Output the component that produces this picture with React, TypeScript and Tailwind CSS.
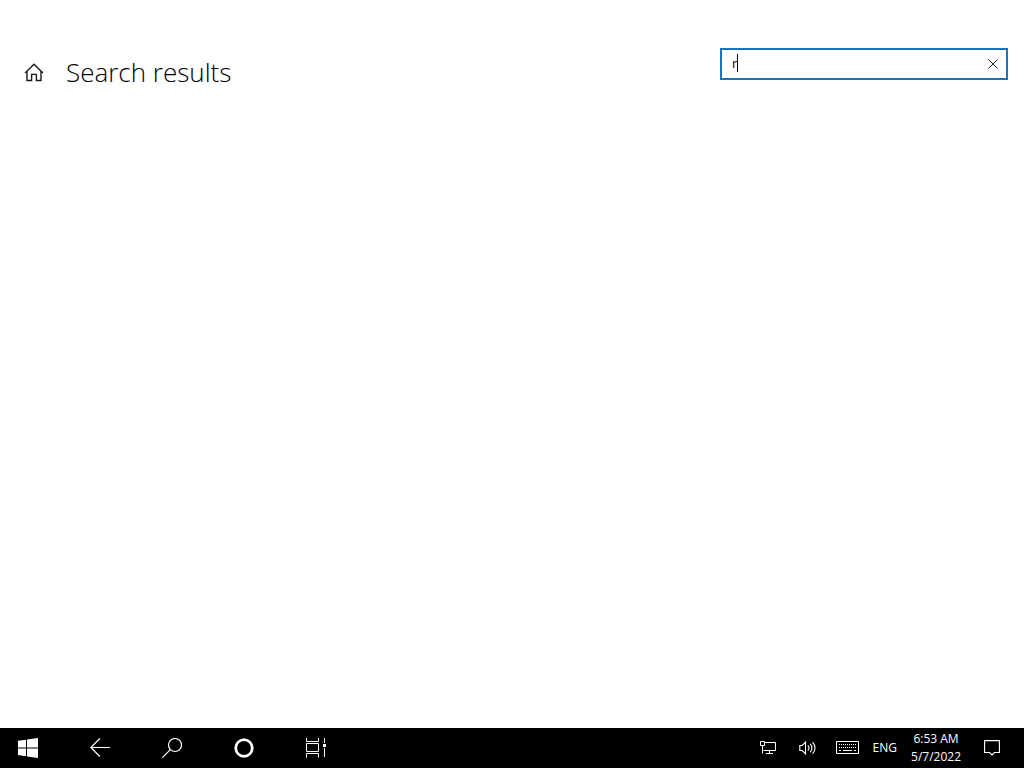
import { useState } from "react";
import type { ReactNode } from "react";

function TaskButton({ label, children }: { label: string; children: ReactNode }) {
  return (
    <button
      type="button"
      aria-label={label}
      className="flex h-10 w-14 items-center justify-center hover:bg-white/10"
    >
      {children}
    </button>
  );
}

function HomeIcon() {
  return (
    <svg viewBox="0 0 20 20" className="size-5" fill="none" stroke="#1a1a1a" strokeWidth="1.4">
      <path d="M1 11 10 2.3l9 8.7" />
      <path d="M3 9.3v9.200h4.600v-6.100h4.800v6.100H17V9.300" />
    </svg>
  );
}

function WindowsIcon() {
  return (
    <svg viewBox="0 0 20 20" className="size-5" fill="#fff">
      <path d="M0 2.8 8 1.7V9.4H0zM9 1.5 20 0v9.4H9zM0 10.4h8v7.8l-8-1.1zM9 10.4h11V20L9 18.4z" />
    </svg>
  );
}

function BackIcon() {
  return (
    <svg viewBox="0 0 20 20" className="size-5" fill="none" stroke="#fff" strokeWidth="1.2">
      <path d="M20 9.5H.8M9.8.5l-9 9 9 9" />
    </svg>
  );
}

function SearchIcon() {
  return (
    <svg viewBox="0 0 20 20" className="size-5" fill="none" stroke="#fff" strokeWidth="1.2">
      <circle cx="13" cy="7" r="6.5" />
      <path d="M8.3 11.7.3 19.7" />
    </svg>
  );
}

function CortanaIcon() {
  return (
    <svg viewBox="0 0 20 20" className="size-5" fill="none" stroke="#fff">
      <circle cx="10" cy="10" r="8.2" strokeWidth="2.6" />
      <circle cx="10" cy="10" r="9.4" strokeWidth="1" opacity=".3" />
    </svg>
  );
}

function TaskViewIcon() {
  return (
    <svg viewBox="0 0 22 20" className="h-5 w-[22px]" fill="none" stroke="#fff">
      <path d="M1.5 0v3.5h12V0M1.5 5.5h12v8h-12zM1.5 19.500v-4h12v4M19.500 0v5M19.500 10v9" />
      <path d="M18 6h3v3h-3z" fill="#fff" stroke="none" />
    </svg>
  );
}

function NetworkIcon() {
  return (
    <svg viewBox="0 0 16 14" className="h-3.5 w-4" fill="none" stroke="#fff">
      <path d="M5 1.500h10.500v8H3.500M.5.500h4v4h-4zM2.500 4.500v8M9.500 9.500v3M6 12.500h7" />
    </svg>
  );
}

function VolumeIcon() {
  return (
    <svg viewBox="0 0 18 14" className="h-3.5 w-[18px]" fill="none" stroke="#fff" strokeWidth="1.100">
      <path d="M.8 4.500h2.500L6.500 1.200v11.600L3.300 9.500H.8z" />
      <path d="M8.800 4.500a3.600 3.600 0 0 1 0 5M11.200 2.800a6 6 0 0 1 0 8.400M13.600 1.100a8.500 8.500 0 0 1 0 11.800" />
    </svg>
  );
}

function KeyboardIcon() {
  return (
    <svg viewBox="0 0 24 14" className="h-3.5 w-6" fill="none" stroke="#fff">
      <path d="M.5.500h22v12H.5z" />
      <path d="M3 3.500h18M3 6.500h18" strokeDasharray="1 1" />
      <path d="M3 9.500h2M7 9.500h9M18 9.500h2" />
    </svg>
  );
}

function NotificationIcon() {
  return (
    <svg viewBox="0 0 16 16" className="size-4" fill="none" stroke="#fff" strokeWidth="1.100">
      <path d="M.6.600h14.800v11.900H10.500L8 15l-2.500-2.500H.6z" />
    </svg>
  );
}

export default function App() {
  const [query, setQuery] = useState("r");
  return (
    <div className="flex min-h-screen flex-col bg-white font-['Open_Sans','Noto_Sans',sans-serif] text-black">
      <main className="flex-1">
        <header className="flex items-start justify-between pt-12 pr-4 pl-6">
          <div className="flex items-center gap-[22px] pt-1">
            <button type="button" aria-label="Home">
              <HomeIcon />
            </button>
            <h1 className="text-[26px] leading-10 font-light">Search results</h1>
          </div>
          <div className="relative flex h-8 w-72 items-center border-2 border-[#1a75bd] bg-white">
            <input
              type="text"
              aria-label="Find a setting"
              value={query}
              onChange={(e) => setQuery(e.target.value)}
              className="h-full min-w-0 flex-1 bg-transparent pb-0.5 pl-2.5 text-[13px] leading-5 outline-none"
            />
            <span aria-hidden="true" className="absolute top-1 left-[15px] h-[18px] w-px bg-black" />
            <button
              type="button"
              aria-label="Clear"
              onClick={() => setQuery("")}
              className="flex h-full w-[26px] items-center justify-center"
            >
              <svg viewBox="0 0 10 10" className="size-2.5" stroke="#222" strokeWidth="1">
                <path d="m.3.3 9.400 9.400M9.700.3.3 9.700" />
              </svg>
            </button>
          </div>
        </header>
      </main>
      <footer className="flex h-10 items-center justify-between bg-black text-white">
        <nav aria-label="Taskbar" className="flex gap-4">
          <TaskButton label="Start"><WindowsIcon /></TaskButton>
          <TaskButton label="Back"><BackIcon /></TaskButton>
          <TaskButton label="Search"><SearchIcon /></TaskButton>
          <TaskButton label="Cortana"><CortanaIcon /></TaskButton>
          <TaskButton label="Task view"><TaskViewIcon /></TaskButton>
        </nav>
        <div className="flex items-center pr-6 text-[12px]">
          <button type="button" aria-label="Network" className="mr-[23px]"><NetworkIcon /></button>
          <button type="button" aria-label="Volume" className="mr-[19px]"><VolumeIcon /></button>
          <button type="button" aria-label="Touch keyboard" className="mr-[13px]"><KeyboardIcon /></button>
          <button type="button" className="mr-[14px]">ENG</button>
          <button type="button" className="mr-[23px] text-center leading-[18px]">
            <span className="block">6:53 AM</span>
            <span className="block">5/7/2022</span>
          </button>
          <button type="button" aria-label="Notifications"><NotificationIcon /></button>
        </div>
      </footer>
    </div>
  );
}
